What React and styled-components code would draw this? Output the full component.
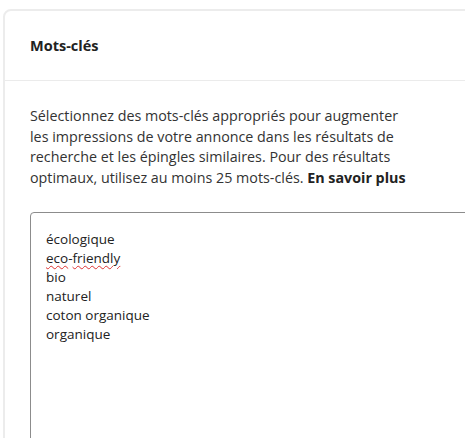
import styled, { createGlobalStyle } from 'styled-components'

const GlobalStyle = createGlobalStyle`
    html, body {
        margin: 0;
        padding: 0;
        overflow: hidden;
        background: #fff;
    }
    body {
        font-family: "Open Sans", "Noto Sans", sans-serif;
        color: #222;
    }
`

const keywords = ['écologique', 'eco-friendly', 'bio', 'naturel', 'coton organique', 'organique']
const misspelled = ['eco', 'friendly']

const Keyword = ({ text }) => {
    const parts = text.split(/(-)/)
    return (
        <KeywordLine>
            {parts.map((p, i) =>
                misspelled.includes(p) ? <Squiggle key={i}>{p}</Squiggle> : <span key={i}>{p}</span>
            )}
        </KeywordLine>
    )
}

const App = () => {
    return (
        <Page>
            <GlobalStyle />
            <Card>
                <CardHeader>
                    <Title>Mots-clés</Title>
                </CardHeader>
                <CardBody>
                    <Description>
                        Sélectionnez des mots-clés appropriés pour augmenter les impressions de votre annonce
                        dans les résultats de recherche et les épingles similaires. Pour des résultats
                        optimaux, utilisez au moins 25 mots-clés. <LearnMore>En savoir plus</LearnMore>
                    </Description>
                    <KeywordBox>
                        {keywords.map((k) => (
                            <Keyword key={k} text={k} />
                        ))}
                    </KeywordBox>
                </CardBody>
            </Card>
        </Page>
    )
}

const Page = styled.div`
    width: 465px;
    height: 438px;
    padding: 9px 0 0 3px;
    box-sizing: border-box;
    overflow: hidden;
`

const Card = styled.section`
    width: 700px;
    border: 2px solid #ececec;
    border-radius: 8px;
    background: #fff;
`

const CardHeader = styled.header`
    height: 69px;
    display: flex;
    align-items: center;
    padding: 0 25px;
    border-bottom: 1px solid #ebebeb;
`

const Title = styled.h2`
    margin: 0;
    font-size: 14.5px;
    font-weight: 700;
    color: #222;
`

const CardBody = styled.div`
    padding: 25px 0 0 25px;
`

const Description = styled.p`
    margin: 0;
    width: 390px;
    font-size: 14.3px;
    line-height: 20.5px;
    color: #333;
`

const LearnMore = styled.a`
    font-weight: 700;
    color: #222;
    cursor: pointer;
`

const KeywordBox = styled.div`
    margin-top: 24px;
    height: 260px;
    padding: 17px 15px;
    border: 1px solid #8c8c8c;
    border-radius: 4px;
    font-size: 13.5px;
    line-height: 19px;
    color: #222;
`

const KeywordLine = styled.div``

const Squiggle = styled.span`
    text-decoration: underline wavy #d33;
    text-decoration-thickness: 1px;
    text-underline-offset: 2px;
`

export default App
